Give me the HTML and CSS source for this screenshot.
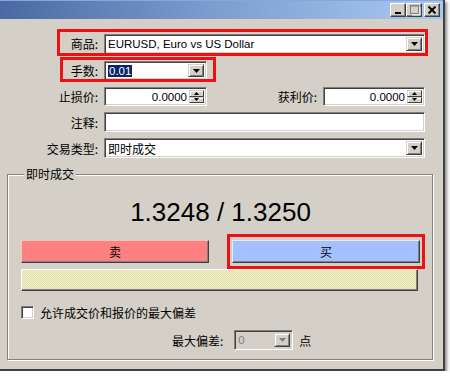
FILE: index.html
```html
<!DOCTYPE html>
<html lang="zh-CN">
<head>
    <meta charset="UTF-8">
    <title>订单</title>
    <link rel="stylesheet" href="styles.css">
</head>
<body>
    <div class="window">
        <div class="titlebar">
            <div class="caption-buttons">
                <span class="cap-btn">
                    <svg width="14" height="12" viewBox="0 0 14 12"><rect x="4" y="8" width="6" height="2" fill="#000"/></svg>
                </span>
                <span class="cap-btn">
                    <svg width="14" height="12" viewBox="0 0 14 12"><rect x="3.5" y="1.5" width="8" height="8" fill="none" stroke="#808080"/><rect x="3.5" y="1.5" width="8" height="1" fill="#808080"/><path d="M5 11h8V3" fill="none" stroke="#fff"/></svg>
                </span>
                <span class="cap-btn close">
                    <svg width="14" height="12" viewBox="0 0 14 12"><path d="M3.5 2.5l7 7M10.5 2.5l-7 7" stroke="#000" stroke-width="2"/></svg>
                </span>
            </div>
        </div>

        <div class="form">
            <div class="row row-symbol">
                <label>商品:</label>
                <div class="field combo">
                    <span class="value">EURUSD, Euro vs US Dollar</span>
                    <span class="drop-btn"><svg width="7" height="4" viewBox="0 0 7 4"><path d="M0 0h7L3.5 4z"/></svg></span>
                </div>
            </div>
            <div class="row row-lots">
                <label>手数:</label>
                <div class="field combo short">
                    <span class="value"><span class="selected">0.01</span></span>
                    <span class="drop-btn"><svg width="7" height="4" viewBox="0 0 7 4"><path d="M0 0h7L3.5 4z"/></svg></span>
                </div>
            </div>
            <div class="row row-stops">
                <label>止损价:</label>
                <div class="field spin short">
                    <span class="value num">0.0000</span>
                    <span class="spin-btns">
                        <span class="spin-btn"><svg width="5" height="3" viewBox="0 0 5 3"><path d="M0 3h5L2.5 0z"/></svg></span>
                        <span class="spin-btn"><svg width="5" height="3" viewBox="0 0 5 3"><path d="M0 0h5L2.5 3z"/></svg></span>
                    </span>
                </div>
                <label class="inline-label">获利价:</label>
                <div class="field spin short2">
                    <span class="value num">0.0000</span>
                    <span class="spin-btns">
                        <span class="spin-btn"><svg width="5" height="3" viewBox="0 0 5 3"><path d="M0 3h5L2.5 0z"/></svg></span>
                        <span class="spin-btn"><svg width="5" height="3" viewBox="0 0 5 3"><path d="M0 0h5L2.5 3z"/></svg></span>
                    </span>
                </div>
            </div>
            <div class="row row-comment">
                <label>注释:</label>
                <div class="field text"></div>
            </div>
            <div class="row row-type">
                <label>交易类型:</label>
                <div class="field combo">
                    <span class="value cjk">即时成交</span>
                    <span class="drop-btn"><svg width="7" height="4" viewBox="0 0 7 4"><path d="M0 0h7L3.5 4z"/></svg></span>
                </div>
            </div>
        </div>

        <fieldset class="group">
            <legend>即时成交</legend>
            <div class="price">1.3248 / 1.3250</div>
            <div class="trade-buttons">
                <div class="trade-btn sell">卖</div>
                <div class="trade-btn buy">买</div>
            </div>
            <div class="status-bar"></div>
            <div class="check-row">
                <span class="checkbox"></span>
                <span>允许成交价和报价的最大偏差</span>
            </div>
            <div class="deviation-row">
                <span>最大偏差:</span>
                <div class="field combo disabled">
                    <span class="value">0</span>
                    <span class="drop-btn"><svg width="7" height="4" viewBox="0 0 7 4"><path d="M0 0h7L3.5 4z" fill="#808080"/></svg></span>
                </div>
                <span>点</span>
            </div>
        </fieldset>

        <!-- red annotation boxes drawn over the dialog -->
        <div class="mark mark-symbol"></div>
        <div class="mark mark-lots"></div>
        <div class="mark mark-buy"></div>
    </div>
</body>
</html>
```

FILE: styles.css
```css
body {
    margin: 0;
    background-color: #fff;
    font-family: "Noto Sans CJK SC", "Liberation Sans", sans-serif;
    font-size: 12px;
    color: #000;
}

.window {
    position: relative;
    width: 443px;
    height: 369px;
    background-color: #d4d0c8;
    border-right: 2px solid #404040;
    border-bottom: 2px solid #404040;
    box-shadow: 2px 2px 3px rgba(0, 0, 0, 0.45);
}

.titlebar {
    height: 19px;
    background: linear-gradient(to right, #4a69a4, #7d9fd0 50%, #a8caf2);
    border-top: 1px solid #8aa6d6;
    box-sizing: border-box;
    display: flex;
    justify-content: flex-end;
    align-items: center;
    padding-right: 3px;
}

.caption-buttons {
    display: flex;
    gap: 0;
}

.cap-btn {
    width: 16px;
    height: 14px;
    box-sizing: border-box;
    background-color: #d4d0c8;
    border: 1px solid;
    border-color: #fff #404040 #404040 #fff;
    box-shadow: inset -1px -1px #808080;
    display: flex;
    align-items: center;
    justify-content: center;
}

.cap-btn.close {
    margin-left: 2px;
}

.form {
    width: 425px;
    padding-top: 14px;
    display: flex;
    flex-direction: column;
    gap: 6px;
}

.row {
    display: flex;
    align-items: center;
}

.row > label {
    width: 98px;
    margin-right: 6px;
    text-align: right;
    flex-shrink: 0;
}

.row-symbol { height: 21px; }
.row-lots { height: 21px; }
.row-stops { height: 19px; }
.row-comment { height: 20px; }
.row-type { height: 20px; }

.field {
    position: relative;
    box-sizing: border-box;
    background-color: #fff;
    border: 1px solid;
    border-color: #808080 #fff #fff #808080;
    box-shadow: inset 1px 1px #404040, inset -1px -1px #d4d0c8;
    display: flex;
    align-items: center;
    flex: 1;
    font-family: "Liberation Sans", "Noto Sans CJK SC", sans-serif;
    font-size: 11.5px;
}

.combo { height: 20px; }
.row-lots .combo { height: 19px; }
.spin { height: 19px; }
.text { height: 20px; }

.short {
    flex: 0 0 103px;
}

.short2 {
    flex: 0 0 102px;
}

.value {
    flex: 1;
    padding: 0 3px;
    white-space: nowrap;
    overflow: hidden;
}

.value.cjk {
    font-family: "Noto Sans CJK SC", sans-serif;
    font-size: 12px;
}

.value.num {
    text-align: right;
    padding-right: 2px;
}

.selected {
    background-color: #0a246a;
    color: #fff;
    padding: 0 1px;
}

.drop-btn {
    width: 16px;
    align-self: stretch;
    margin: 2px 2px 2px 0;
    box-sizing: border-box;
    background-color: #d4d0c8;
    border: 1px solid;
    border-color: #d4d0c8 #404040 #404040 #d4d0c8;
    box-shadow: inset 1px 1px #fff, inset -1px -1px #808080;
    display: flex;
    align-items: center;
    justify-content: center;
}

.spin-btns {
    width: 15px;
    align-self: stretch;
    margin: 2px 2px 2px 0;
    display: flex;
    flex-direction: column;
}

.spin-btn {
    flex: 1;
    box-sizing: border-box;
    background-color: #d4d0c8;
    border: 1px solid;
    border-color: #d4d0c8 #404040 #404040 #d4d0c8;
    box-shadow: inset 1px 1px #fff;
    display: flex;
    align-items: center;
    justify-content: center;
}

.inline-label {
    flex: 1;
    text-align: right;
    margin-right: 8px;
}

.group {
    position: relative;
    margin: 9px 0 0 7px;
    width: 426px;
    height: 193px;
    box-sizing: border-box;
    padding: 0 12px 0 13px;
    border: 1px solid #808080;
    box-shadow: inset 1px 1px #fff, 1px 1px #fff;
}

.group legend {
    padding: 0 2px;
    margin-left: 3px;
    background-color: #d4d0c8;
    line-height: 14px;
}

.price {
    text-align: center;
    font-family: "Liberation Sans", sans-serif;
    font-size: 26px;
    line-height: 30px;
    margin-top: 16px;
}

.trade-buttons {
    display: flex;
    justify-content: space-between;
    margin-top: 13px;
}

.trade-btn {
    width: 188px;
    height: 23px;
    box-sizing: border-box;
    border: 1px solid;
    border-color: #fff #404040 #404040 #fff;
    box-shadow: inset -1px -1px #808080;
    display: flex;
    align-items: center;
    justify-content: center;
}

.sell {
    background-color: #ff8080;
    border-top-color: #ffc0c0;
    border-left-color: #ffc0c0;
}

.buy {
    background-color: #a4c0ff;
    border-top-color: #e0ecff;
    border-left-color: #e0ecff;
}

.status-bar {
    margin-top: 6px;
    width: 397px;
    height: 22px;
    box-sizing: border-box;
    border: 1px solid;
    border-color: #fff #404040 #404040 #fff;
    box-shadow: inset -1px -1px #808080;
    background: repeating-conic-gradient(#f4f4c4 0 25%, #dcdab0 0 50%) 0 0 / 2px 2px;
}

.check-row {
    display: flex;
    align-items: center;
    gap: 6px;
    height: 17px;
    margin-top: 13px;
}

.checkbox {
    width: 13px;
    height: 13px;
    box-sizing: border-box;
    background-color: #fff;
    border: 1px solid;
    border-color: #808080 #fff #fff #808080;
    box-shadow: inset 1px 1px #404040, inset -1px -1px #d4d0c8;
}

.deviation-row {
    display: flex;
    align-items: center;
    height: 20px;
    margin-top: 9px;
    padding-left: 151px;
}

.deviation-row .field {
    flex: 0 0 59px;
    height: 20px;
    margin: 0 6px 0 11px;
}

.disabled {
    background-color: #d4d0c8;
    color: #808080;
    box-shadow: inset 1px 1px #404040, inset -1px -1px #d4d0c8;
}

.mark {
    position: absolute;
    box-sizing: border-box;
    border: 3px solid #ee1111;
}

.mark-symbol {
    left: 57px;
    top: 29px;
    width: 371px;
    height: 27px;
}

.mark-lots {
    left: 60px;
    top: 57px;
    width: 156px;
    height: 25px;
}

.mark-buy {
    left: 227px;
    top: 234px;
    width: 198px;
    height: 35px;
}
```
